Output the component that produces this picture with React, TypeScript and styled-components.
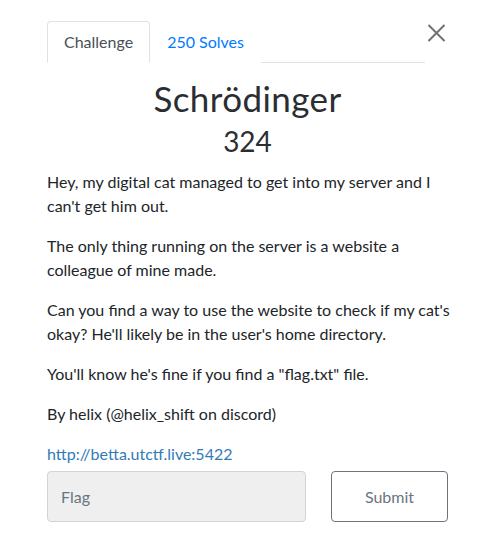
import React from "react";
import styled, { createGlobalStyle } from "styled-components";

const Global = createGlobalStyle`
  html, body { margin: 0; padding: 0; background: #fff; }
  body { font-family: Lato, "Open Sans", sans-serif; color: #212529; }
`;

const Page = styled.div`
  position: relative;
  width: 492px;
  height: 544px;
  padding: 21px 0 0 47px;
  box-sizing: border-box;
`;

const Content = styled.div`
  width: 401px;
`;

const Tabs = styled.div`
  display: flex;
  width: 378px;
  border-bottom: 1px solid #dee2e6;
`;

const Tab = styled.div<{ $active?: boolean }>`
  padding: 8px 16px;
  font-size: 16px;
  line-height: 24px;
  margin-bottom: -1px;
  border: 1px solid ${(p) => (p.$active ? "#dee2e6" : "transparent")};
  border-bottom-color: ${(p) => (p.$active ? "#fff" : "transparent")};
  border-radius: 4px 4px 0 0;
  color: ${(p) => (p.$active ? "#495057" : "#007bff")};
  background: #fff;
`;

const Close = styled.div`
  position: absolute;
  top: 24px;
  left: 427px;
  width: 19px;
  height: 18px;
`;

const Title = styled.h2`
  margin: 13px 0 0;
  text-align: center;
  font-weight: 400;
  font-size: 35px;
  line-height: 44px;
  letter-spacing: 0.4px;
  color: #2a2e33;
`;

const Points = styled.h3`
  margin: 4px 0 0;
  text-align: center;
  font-weight: 400;
  font-size: 28px;
  line-height: 34px;
  color: #2a2e33;
`;

const Desc = styled.div`
  margin-top: 12px;
  width: 408px;
  font-size: 16px;
  line-height: 24px;
`;

const P = styled.p`
  margin: 0 0 16px;
  &:last-child { margin-bottom: 5px; }
`;

const Link = styled.a`
  color: #337ab7;
  text-decoration: none;
`;

const FormRow = styled.div`
  display: flex;
  gap: 25px;
`;

const Input = styled.div`
  flex: 0 0 259px;
  height: 51px;
  box-sizing: border-box;
  background: #efefef;
  border: 1px solid #ced4da;
  border-radius: 4px;
  padding: 0 13px;
  display: flex;
  align-items: center;
  font-size: 16px;
  color: #6c757d;
`;

const Button = styled.div`
  flex: 0 0 117px;
  height: 51px;
  box-sizing: border-box;
  border: 1px solid #6c757d;
  border-radius: 4px;
  display: flex;
  align-items: center;
  justify-content: center;
  font-size: 16px;
  color: #6c757d;
  background: #fff;
`;

export default function App() {
  return (
    <>
      <Global />
      <Page>
        <Close>
          <svg width="19" height="18" viewBox="0 0 19 18">
            <path d="M1.5 1 L17.5 17 M17.5 1 L1.5 17" stroke="#717171" strokeWidth="2" fill="none" />
          </svg>
        </Close>
        <Content>
          <Tabs>
            <Tab $active>Challenge</Tab>
            <Tab>250 Solves</Tab>
          </Tabs>
          <Title>Schrödinger</Title>
          <Points>324</Points>
          <Desc>
            <P>Hey, my digital cat managed to get into my server and I can't get him out.</P>
            <P>The only thing running on the server is a website a colleague of mine made.</P>
            <P>Can you find a way to use the website to check if my cat's okay? He'll likely be in the user's home directory.</P>
            <P>You'll know he's fine if you find a "flag.txt" file.</P>
            <P>By helix (@helix_shift on discord)</P>
            <P><Link href="#">http://betta.utctf.live:5422</Link></P>
          </Desc>
          <FormRow>
            <Input>Flag</Input>
            <Button>Submit</Button>
          </FormRow>
        </Content>
      </Page>
    </>
  );
}
